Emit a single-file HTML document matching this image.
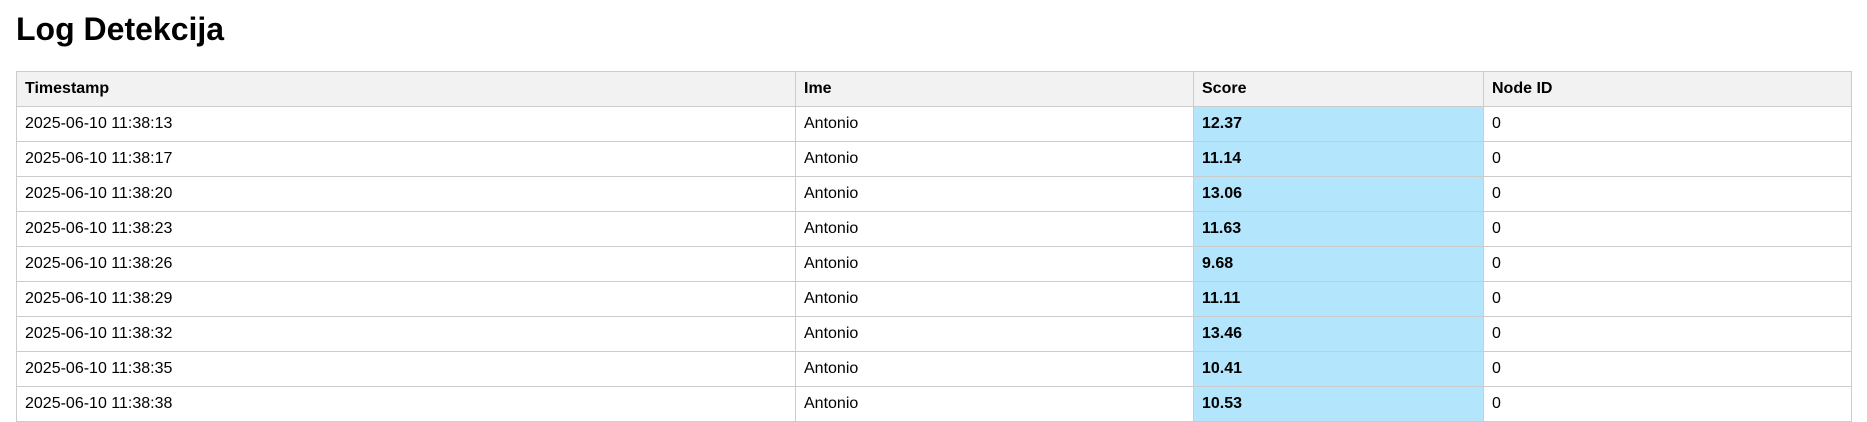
<!DOCTYPE html>
<html><head><meta charset="utf-8"><style>
html,body{margin:0;padding:0;background:#fff;}
body{font-family:"Liberation Sans",Arial,sans-serif;color:#000;width:1867px;height:421px;overflow:hidden;position:relative;}
h1{position:absolute;left:16px;top:9px;margin:0;font-size:32px;font-weight:bold;line-height:40px;}
table{position:absolute;left:16px;top:71px;border-collapse:collapse;width:1835px;table-layout:fixed;font-size:16px;}
th,td{border:1px solid #ccc;padding:0 8px;height:34px;text-align:left;vertical-align:middle;}
th{background:#f2f2f2;font-weight:bold;}
td.s{background:#b3e5fc;font-weight:bold;}
</style></head><body>
<h1>Log Detekcija</h1>
<table>
<colgroup><col style="width:779px"><col style="width:398px"><col style="width:290px"><col style="width:368px"></colgroup>
<tr><th>Timestamp</th><th>Ime</th><th>Score</th><th>Node ID</th></tr>
<tr><td>2025-06-10 11:38:13</td><td>Antonio</td><td class="s">12.37</td><td>0</td></tr>
<tr><td>2025-06-10 11:38:17</td><td>Antonio</td><td class="s">11.14</td><td>0</td></tr>
<tr><td>2025-06-10 11:38:20</td><td>Antonio</td><td class="s">13.06</td><td>0</td></tr>
<tr><td>2025-06-10 11:38:23</td><td>Antonio</td><td class="s">11.63</td><td>0</td></tr>
<tr><td>2025-06-10 11:38:26</td><td>Antonio</td><td class="s">9.68</td><td>0</td></tr>
<tr><td>2025-06-10 11:38:29</td><td>Antonio</td><td class="s">11.11</td><td>0</td></tr>
<tr><td>2025-06-10 11:38:32</td><td>Antonio</td><td class="s">13.46</td><td>0</td></tr>
<tr><td>2025-06-10 11:38:35</td><td>Antonio</td><td class="s">10.41</td><td>0</td></tr>
<tr><td>2025-06-10 11:38:38</td><td>Antonio</td><td class="s">10.53</td><td>0</td></tr>
</table>
</body></html>
